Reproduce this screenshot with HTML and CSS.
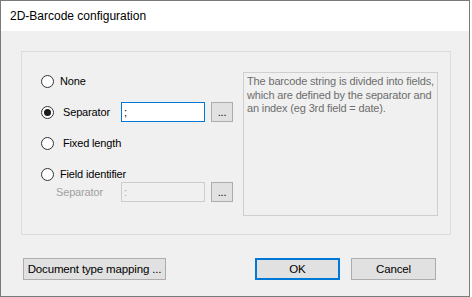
FILE: index.html
```html
<!DOCTYPE html>
<html lang="en">
<head>
  <meta charset="UTF-8" />
  <title>2D-Barcode configuration</title>
  <link rel="stylesheet" href="styles.css">
</head>
<body>

<div class="window">
  <div class="titlebar">2D-Barcode configuration</div>

  <div class="content">
    <div class="groupbox">
      <div class="options">
        <div class="row row-none">
          <span class="radio"></span>
          <span class="label">None</span>
        </div>
        <div class="row">
          <span class="radio checked"></span>
          <span class="label label-wide shift">Separator</span>
          <span class="textbox focused">;</span>
          <span class="smallbtn">...</span>
        </div>
        <div class="row">
          <span class="radio"></span>
          <span class="label shift">Fixed length</span>
        </div>
        <div class="row row-field">
          <span class="radio"></span>
          <span class="label">Field identifier</span>
        </div>
        <div class="row row-sub">
          <span class="label sub-label">Separator</span>
          <span class="textbox disabled">:</span>
          <span class="smallbtn">...</span>
        </div>
      </div>

      <div class="info">The barcode string is divided into fields, which are defined by the separator and an index (eg 3rd field = date).</div>
    </div>

    <div class="buttons">
      <button class="btn btn-mapping">Document type mapping ...</button>
      <button class="btn btn-ok">OK</button>
      <button class="btn">Cancel</button>
    </div>
  </div>
</div>

</body>
</html>
```

FILE: styles.css
```css
body { margin: 0; background: #fff; font-family: "Liberation Sans", Arial, sans-serif; font-size: 11px; letter-spacing: -0.15px; color: #000; }
.window { width: 468px; height: 295px; border: 1px solid #7a7a7a; background: #f0f0f0; display: flex; flex-direction: column; }
.titlebar { height: 30px; background: #fff; padding-left: 9px; display: flex; align-items: center; font-size: 12px; letter-spacing: 0; }
.content { padding: 20px 18px 0 20px; }

.groupbox { height: 182px; border: 1px solid #dcdcdc; display: flex; padding-left: 19px; }
.options { width: 192px; flex: none; padding-top: 19px; }
.row { display: flex; align-items: center; height: 20px; margin-bottom: 11px; }
.row-field { height: 16px; margin-top: 13px; margin-bottom: 0; }
.row-sub { margin-bottom: 0; }
.radio { width: 11px; height: 11px; border: 1px solid #333; border-radius: 50%; background: #fff; display: flex; align-items: center; justify-content: center; margin-right: 6px; flex: none; }
.radio.checked::after { content: ""; width: 7px; height: 7px; border-radius: 50%; background: #1a1a1a; }
.label { flex: none; }
.shift { padding-left: 3px; }
.label-wide { width: 58px; }
.sub-label { color: #a0a0a0; width: 65px; padding-left: 15px; }
.textbox { flex: none; width: 80px; height: 18px; border: 1px solid #7a7a7a; background: #fff; display: flex; align-items: center; padding-left: 2px; }
.textbox.focused { border-color: #0078d7; }
.textbox.disabled { border-color: #cccccc; background: #f0f0f0; color: #a0a0a0; }
.smallbtn { flex: none; width: 20px; height: 18px; border: 1px solid #adadad; background: #e1e1e1; margin-left: 6px; display: flex; align-items: center; justify-content: center; font-size: 11px; }

.info { flex: none; width: 189px; height: 140px; margin: 20px 0 0 10px; border: 1px solid #cfcfcf; padding: 2px 1px 0 3px; color: #6d6d6d; line-height: 13.5px; }

.buttons { display: flex; margin-top: 23px; padding-left: 2px; }
.btn { height: 22px; width: 85px; border: 1px solid #adadad; background: #e1e1e1; font-family: inherit; font-size: 11.5px; letter-spacing: -0.15px; color: #000; padding: 0; margin-right: 11px; white-space: nowrap; }
.btn-mapping { width: 143px; margin-right: 89px; }
.btn-ok { border: 2px solid #0078d7; }
```
